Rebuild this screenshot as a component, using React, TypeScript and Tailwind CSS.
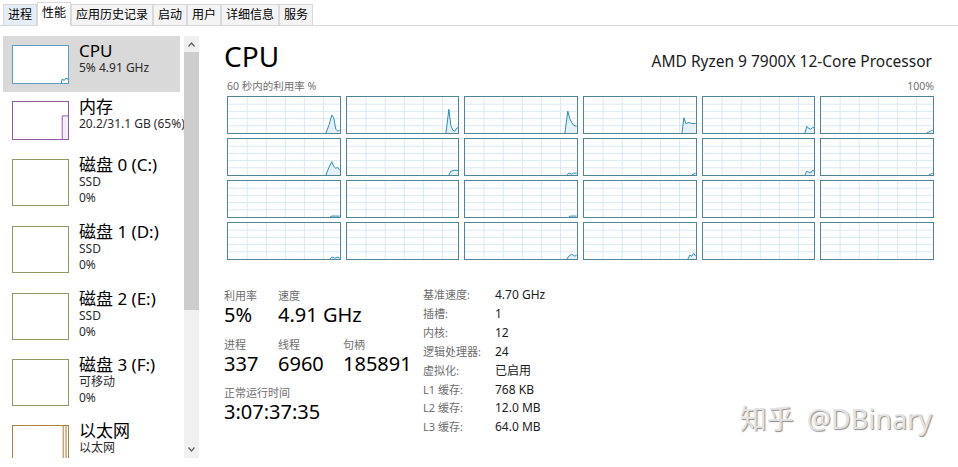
import React from 'react'

const tabs = ['进程', '性能', '应用历史记录', '启动', '用户', '详细信息', '服务']

// usage traces for the 24 logical processors, drawn in a 114x38 box
const cores: string[] = [
  '100,38 103,30 106,19 108,22 110,34 112,36 114,35',
  '101,38 104,13 106,30 108,35 110,36 112,33 114,32',
  '102,38 105,15 107,23 109,27 111,30 114,31',
  '100,38 102,22 104,28 107,27 110,28 114,28',
  '104,38 106,31 108,33 110,34 112,32 114,33',
  '108,38 110,37 112,36 114,35',
  '100,38 103,30 106,24 108,29 110,31 112,30 114,33',
  '104,38 106,34 110,33 112,33 114,34',
  '104,38 106,36 109,37 111,36 114,36',
  '110,38 112,37 114,36',
  '104,38 106,34 108,35 110,36 112,33 114,34',
  '110,38 112,37 114,36',
  '104,38 106,37 110,37 114,37',
  '',
  '106,38 108,37 112,37 114,37',
  '',
  '',
  '',
  '104,38 106,36 109,37 112,36 114,37',
  '',
  '104,38 106,35 109,33 112,35 114,34',
  '106,38 108,34 110,35 112,32 114,35',
  '',
  '',
]

const info: [string, string][] = [
  ['基准速度:', '4.70 GHz'],
  ['插槽:', '1'],
  ['内核:', '12'],
  ['逻辑处理器:', '24'],
  ['虚拟化:', '已启用'],
  ['L1 缓存:', '768 KB'],
  ['L2 缓存:', '12.0 MB'],
  ['L3 缓存:', '64.0 MB'],
]

function CoreGraph({ pts }: { pts: string }) {
  return (
    <div className="h-[38px] border border-[#4f8596] bg-white">
      <svg viewBox="0 0 114 38" preserveAspectRatio="none" className="block h-full w-full">
        {[19.5, 39, 58.5, 78, 97.5].map((x) => (
          <line key={x} x1={x} y1={0} x2={x} y2={38} stroke="#d9eaf4" strokeWidth={1} vectorEffect="non-scaling-stroke" />
        ))}
        {[7.6, 15.2, 22.8, 30.4].map((y) => (
          <line key={y} x1={0} y1={y} x2={114} y2={y} stroke="#d9eaf4" strokeWidth={1} vectorEffect="non-scaling-stroke" />
        ))}
        {pts && <polygon points={`${pts} 114,38`} fill="#e6f0f7" />}
        {pts && (
          <polyline points={pts} fill="none" stroke="#2a8cc0" strokeWidth={1} vectorEffect="non-scaling-stroke" />
        )}
      </svg>
    </div>
  )
}

function Thumb({ kind, className }: { kind: string; className: string }) {
  return (
    <div className={`mt-[3px] w-[57px] shrink-0 border bg-white ${className}`}>
      <svg viewBox="0 0 57 40" preserveAspectRatio="none" className="block h-full w-full">
        {kind === 'cpu' && (
          <polyline points="50,40 51,36 53,37 55,35 57,36" fill="none" stroke="#1a86c0" strokeWidth={1} vectorEffect="non-scaling-stroke" />
        )}
        {kind === 'mem' && (
          <>
            <rect x={51} y={15} width={6} height={25} fill="#f3eef6" />
            <polyline points="51,40 51,15 57,15" fill="none" stroke="#9b5bb3" strokeWidth={1} vectorEffect="non-scaling-stroke" />
          </>
        )}
        {kind === 'net' && (
          <>
            <rect x={52} y={0} width={3} height={40} fill="#fbf5e8" />
            <line x1={52} y1={0} x2={52} y2={40} stroke="#a8823f" strokeWidth={1} vectorEffect="non-scaling-stroke" />
            <line x1={55} y1={0} x2={55} y2={40} stroke="#a8823f" strokeWidth={1} vectorEffect="non-scaling-stroke" />
          </>
        )}
      </svg>
    </div>
  )
}

function SideItem({
  title,
  lines,
  kind,
  box,
  height,
  selected,
}: {
  title: string
  lines: string[]
  kind: string
  box: string
  height: string
  selected?: boolean
}) {
  return (
    <div className={`flex w-[177px] items-start pl-[9px] pt-[6px] ${height} ${selected ? 'bg-[#d9d9d9]' : ''}`}>
      <Thumb kind={kind} className={box} />
      <div className="ml-[10px] whitespace-nowrap">
        <div className="text-[17px] leading-[18px] text-black">{title}</div>
        {lines.map((l, i) => (
          <div key={i} className="text-[12px] leading-[16px] text-[#2b2b2b]">
            {l}
          </div>
        ))}
      </div>
    </div>
  )
}

export default function App() {
  return (
    <div className="relative h-[467px] w-[958px] overflow-hidden bg-white font-['Noto_Sans','Noto_Sans_CJK_SC',sans-serif] text-black">
      {/* tab strip */}
      <div className="flex h-[26px] items-end border-b border-[#d9d9d9] pl-[3px]">
        {tabs.map((t) => (
          <div
            key={t}
            className={`flex items-center justify-center border border-b-0 px-[4px] text-[12px] leading-none ${
              t === '性能'
                ? '-mb-px h-[24px] border-[#d9d9d9] bg-white pb-[3px]'
                : t === '进程'
                  ? 'h-[21px] border-[#d9d9d9] bg-[#e5eef7]'
                  : 'h-[21px] border-[#d9d9d9] bg-[#f4f4f4]'
            }`}
          >
            {t}
          </div>
        ))}
      </div>

      <div className="flex">
        {/* left list */}
        <div className="w-[200px] shrink-0 pt-[10px]">
          <div className="flex h-[422px]">
            <div className="w-[184px] overflow-hidden pl-[3px]">
              <SideItem title="CPU" lines={['5% 4.91 GHz']} kind="cpu" box="h-[39px] border-[#5a9ec0]" height="h-[56px]" selected />
              <SideItem title="内存" lines={['20.2/31.1 GB (65%)']} kind="mem" box="h-[39px] border-[#8d5d9f]" height="h-[58px]" />
              <SideItem title="磁盘 0 (C:)" lines={['SSD', '0%']} kind="disk" box="h-[47px] border-[#8a9a62]" height="h-[67px]" />
              <SideItem title="磁盘 1 (D:)" lines={['SSD', '0%']} kind="disk" box="h-[47px] border-[#8a9a62]" height="h-[66.5px]" />
              <SideItem title="磁盘 2 (E:)" lines={['SSD', '0%']} kind="disk" box="h-[47px] border-[#8a9a62]" height="h-[66.5px]" />
              <SideItem title="磁盘 3 (F:)" lines={['可移动', '0%']} kind="disk" box="h-[47px] border-[#8a9a62]" height="h-[66px]" />
              <SideItem title="以太网" lines={['以太网']} kind="net" box="h-[47px] border-[#a8823f]" height="h-[66px]" />
            </div>
            <div className="flex w-[15px] flex-col bg-[#f0f0f0]">
              <div className="flex h-[16px] items-center justify-center">
                <svg width="7" height="5" viewBox="0 0 7 5">
                  <polyline points="0.5,4.5 3.5,1 6.5,4.5" fill="none" stroke="#606060" strokeWidth={1.2} />
                </svg>
              </div>
              <div className="h-[258px] bg-[#cdcdcd]" />
              <div className="flex-1" />
              <div className="flex h-[18px] items-center justify-center">
                <svg width="7" height="5" viewBox="0 0 7 5">
                  <polyline points="0.5,0.5 3.5,4 6.5,0.5" fill="none" stroke="#606060" strokeWidth={1.2} />
                </svg>
              </div>
            </div>
          </div>
        </div>

        {/* performance panel */}
        <div className="flex-1 px-[24px] pt-[14px]">
          <div className="flex items-baseline justify-between">
            <div className="text-[28px] leading-[32px]">CPU</div>
            <div className="mr-[2px] text-[15.5px] leading-[20px] text-[#1b1b1b]">AMD Ryzen 9 7900X 12-Core Processor</div>
          </div>
          <div className="mt-[7px] flex justify-between pl-[3px] text-[10.5px] leading-[14px] text-[#707070]">
            <span>60 秒内的利用率 %</span>
            <span>100%</span>
          </div>
          <div className="ml-[3px] mt-[3px] grid grid-cols-6 gap-x-[5px] gap-y-[4px]">
            {cores.map((p, i) => (
              <CoreGraph key={i} pts={p} />
            ))}
          </div>

          <div className="mt-[24px] flex">
            <div className="w-[199px] pt-[5px]">
              <div className="flex">
                <div className="w-[54px]">
                  <div className="text-[11px] leading-[14px] text-[#6d6d6d]">利用率</div>
                  <div className="text-[20px] leading-[24px]">5%</div>
                </div>
                <div>
                  <div className="text-[11px] leading-[14px] text-[#6d6d6d]">速度</div>
                  <div className="text-[20px] leading-[24px]">4.91 GHz</div>
                </div>
              </div>
              <div className="mt-[11px] flex">
                <div className="w-[54px]">
                  <div className="text-[11px] leading-[14px] text-[#6d6d6d]">进程</div>
                  <div className="text-[20px] leading-[24px]">337</div>
                </div>
                <div className="w-[65px]">
                  <div className="text-[11px] leading-[14px] text-[#6d6d6d]">线程</div>
                  <div className="text-[20px] leading-[24px]">6960</div>
                </div>
                <div>
                  <div className="text-[11px] leading-[14px] text-[#6d6d6d]">句柄</div>
                  <div className="text-[20px] leading-[24px]">185891</div>
                </div>
              </div>
              <div className="mt-[10px]">
                <div className="text-[11px] leading-[14px] text-[#6d6d6d]">正常运行时间</div>
                <div className="text-[20px] leading-[24px]">3:07:37:35</div>
              </div>
            </div>
            <div className="mt-[2px] grid grid-cols-[72px_auto] leading-[18.9px]">
              {info.map(([k, v]) => (
                <React.Fragment key={k}>
                  <div className="text-[11px] text-[#6d6d6d]">{k}</div>
                  <div className="text-[12px] text-[#1b1b1b]">{v}</div>
                </React.Fragment>
              ))}
            </div>
          </div>
        </div>
      </div>

      {/* watermark */}
      <div className="absolute right-[26px] top-[403px] flex gap-[13px] text-[27px] leading-[32px] text-[#e3e3e3] [text-shadow:1px_1px_1px_rgba(0,0,0,0.45)]">
        <span>知乎</span>
        <span>@DBinary</span>
      </div>
    </div>
  )
}
